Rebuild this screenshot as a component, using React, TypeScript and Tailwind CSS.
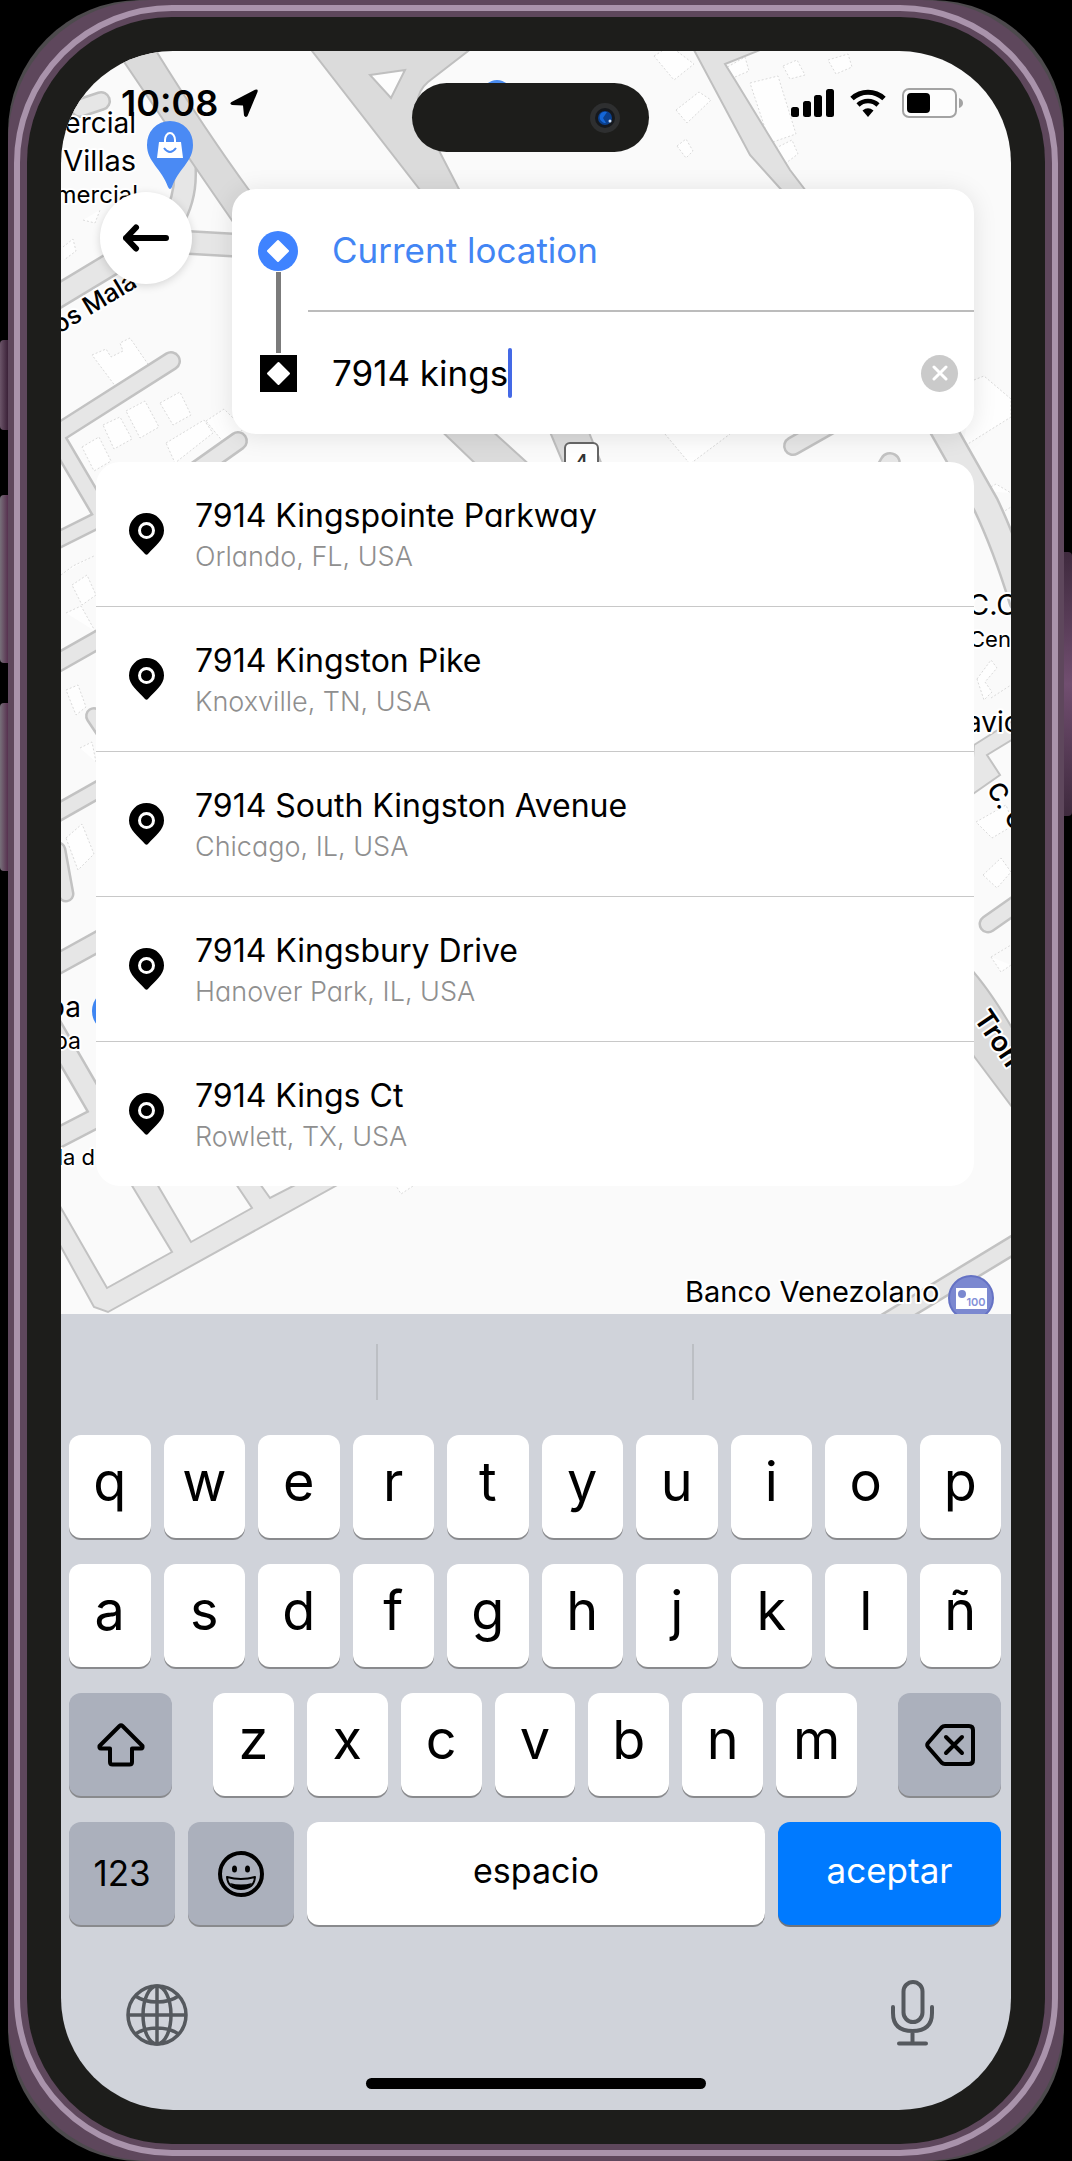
import type { ReactNode } from "react";

const results = [
  { title: "7914 Kingspointe Parkway", place: "Orlando, FL, USA" },
  { title: "7914 Kingston Pike", place: "Knoxville, TN, USA" },
  { title: "7914 South Kingston Avenue", place: "Chicago, IL, USA" },
  { title: "7914 Kingsbury Drive", place: "Hanover Park, IL, USA" },
  { title: "7914 Kings Ct", place: "Rowlett, TX, USA" },
];

const minorRoads: { d: string; w: number }[] = [
  { d: "M185 120 L185 175 Q185 200 172 222", w: 22 },
  { d: "M50 301 L128 254 Q150 241 180 242 L250 246", w: 23 },
  { d: "M50 438 L171 361", w: 18 },
  { d: "M52 430 L102 515", w: 17 },
  { d: "M50 544 L106 516", w: 16 },
  { d: "M190 475 L238 441", w: 18 },
  { d: "M50 667 L110 633", w: 18 },
  { d: "M94 716 L110 740", w: 16 },
  { d: "M50 817 L110 783", w: 17 },
  { d: "M58 850 L66 894", w: 15 },
  { d: "M80 108 L101 101", w: 18 },
  { d: "M50 968 L110 935", w: 20 },
  { d: "M50 1025 L108 1125", w: 22 },
  { d: "M50 1142 L110 1111", w: 20 },
  { d: "M793 446 L860 408", w: 18 },
  { d: "M890 463 L880 480", w: 20 },
  { d: "M935 415 L986 505 Q1005 545 1022 600", w: 26 },
  { d: "M988 924 L1025 898", w: 17 },
  { d: "M1025 1238 L880 1326", w: 18 },
];

const blocks = [
  "M61 1208 L107 1288 172 1252 131 1184 157 1184 191 1242 252 1208 236 1184 260 1184 270 1198 297 1184 339 1184 108 1312 94 1307 55 1236 Z",
  "M974 745 L1020 716 1020 735 987 755 1000 775 970 796 Z",
];

const buildings = [
  "M92 355 l14 -6 5 8 12 -6 -3 -8 10 -5 22 32 -36 17 Z",
  "M126 411 l19 -10 14 26 -19 11 Z",
  "M160 403 l20 -11 11 23 -18 10 Z",
  "M103 425 l17 -8 12 22 -18 10 Z",
  "M82 447 l17 -10 12 24 -17 10 Z",
  "M166 443 l38 -23 9 13 -38 30 Z",
  "M206 421 l18 -12 20 20 -20 14 Z",
  "M83 220 l12 3 5 -13 M63 247 l10 -8 3 12 -12 9",
  "M654 56 l16 -10 24 18 -20 16 Z",
  "M676 110 l23 -18 12 8 -24 23 Z",
  "M677 146 l9 -7 7 12 -7 7 Z",
  "M783 66 l14 -6 8 15 -15 4 Z",
  "M828 60 l20 -6 4 13 -16 7 Z",
  "M724 69 l21 -12 4 14 -21 9 Z",
  "M750 83 l28 -7 18 58 -26 9 Z",
  "M772 150 l20 -10 6 14 -16 12 Z",
  "M665 434 l25 30 40 -30",
  "M974 380 l10 -4 27 23 v18 l-48 30",
  "M984 491 l12 -7 15 9 M995 517 l16 -10",
  "M977 679 l14 -19 6 8 -12 14 7 10 -8 8 Z",
  "M991 698 l20 -13",
  "M976 822 l30 -17 8 20 -22 13 Z",
  "M983 875 l18 -17 10 14 -14 16 Z",
  "M991 957 l20 -12 M991 957 l10 15 10 -7",
  "M61 575 l12 -9 21 -10 M72 585 l15 -10 9 20 -14 10 Z",
  "M66 613 l15 -7 14 25",
  "M66 690 l12 -5 8 22 -10 8 Z",
  "M80 748 l12 -6 4 20",
  "M66 838 l16 -14 12 30 -16 16 Z",
  "M395 1184 l6 10 15 -10",
];

function MapBackdrop() {
  return (
    <svg
      className="absolute inset-0 h-full w-full"
      viewBox="61 51 950 1263"
      preserveAspectRatio="xMinYMin slice"
      fontFamily="Inter, sans-serif"
      aria-hidden="true"
    >
      <rect x="61" y="51" width="950" height="1263" fill="#fafafa" />
      <g fill="#fefefe" stroke="#dadada" strokeWidth="1" strokeDasharray="2 2">
        {buildings.map((d) => (
          <path key={d} d={d} />
        ))}
      </g>
      <g fill="none" stroke="#c2c2c2" strokeLinecap="round" strokeLinejoin="round">
        {minorRoads.map((r) => (
          <path key={r.d} d={r.d} strokeWidth={r.w + 2} />
        ))}
      </g>
      <g fill="none" stroke="#e6e6e6" strokeLinecap="round" strokeLinejoin="round">
        {minorRoads.map((r) => (
          <path key={r.d} d={r.d} strokeWidth={r.w - 3} />
        ))}
      </g>
      <g fill="#e7e7e7" stroke="#c2c2c2" strokeWidth="2">
        {blocks.map((d) => (
          <path key={d} d={d} />
        ))}
      </g>
      <g fill="#dbdbdb" stroke="#bfbfbf" strokeWidth="2">
        <path d="M116 50 L153 46 Q205 130 249 190 L240 232 Q190 160 160 115 Z" />
        <path d="M312 45 L312 51 424 195 462 195 419 112 Q414 94 428 82 L472 48 Z" />
        <path d="M370 75 L405 70 391 98 Z" fill="#fdfdfd" />
        <path d="M694 50 L750 155 786 195 809 195 790 170 735 80 725 64 760 50 Z" fill="#e2e2e2" />
        <path d="M430 420 L480 468 533 468 480 420 Z" />
        <path d="M545 420 L566 470 604 470 584 420 Z" />
        <path d="M970 968 Q990 990 1015 1033 L1015 1111 970 1051 Z" />
      </g>
      <circle cx="497" cy="94" r="14" fill="#4a8cf0" />
      <circle cx="114" cy="1011" r="22" fill="#3f86f2" />

      <path d="M170 121 a23 23 0 0 1 23 24 c0 17 -15 24 -21 42 q-2 4 -4 0 c-6 -18 -21 -25 -21 -42 a23 23 0 0 1 23 -24 Z" fill="#4a8af4" />
      <path d="M159 142 h22 l2 16 h-26 Z" fill="#fff" />
      <path d="M165 145 v-5 a5 7 0 0 1 10 0 v5" fill="none" stroke="#fff" strokeWidth="2" />
      <path d="M164 148 q6 8 12 0" fill="none" stroke="#4a8af4" strokeWidth="2" />

      <g fill="#000" stroke="#fff" strokeWidth="4" paintOrder="stroke" strokeLinejoin="round">
        <g textAnchor="end">
          <text x="136" y="133" fontSize="28">ercial</text>
          <text x="136" y="171" fontSize="29">Villas</text>
          <text x="138" y="203" fontSize="24">mercial</text>
          <text x="81" y="1017" fontSize="28">pa</text>
          <text x="81" y="1049" fontSize="23">pa</text>
          <text x="95" y="1165" fontSize="22">la d</text>
        </g>
        <text transform="translate(59 334) rotate(-31)" fontSize="25" fontWeight="500">os Mala</text>
        <text x="968" y="615" fontSize="29">C.C</text>
        <text x="969" y="647" fontSize="22">Cen</text>
        <text x="966" y="732" fontSize="28">avic</text>
        <text transform="translate(986 789) rotate(58)" fontSize="25" fontWeight="500">C. C</text>
        <text transform="translate(973 1018) rotate(56)" fontSize="28" fontWeight="600">Tron</text>
        <text x="685" y="1302" fontSize="29">Banco Venezolano</text>
      </g>

      <rect x="565" y="443" width="33" height="34" rx="5" fill="#fff" stroke="#666" strokeWidth="2" />
      <text x="581" y="473" fontSize="26" textAnchor="middle" fill="#333">4</text>

      <circle cx="971" cy="1298" r="22" fill="#7b88d0" stroke="#6572c4" strokeWidth="2" />
      <rect x="956" y="1288" width="31" height="21" fill="#fff" />
      <circle cx="962" cy="1294" r="4" fill="#7b88d0" />
      <text x="976" y="1306" fontSize="11" fontWeight="600" textAnchor="middle" fill="#8490d8">100</text>
    </svg>
  );
}

function StatusBar() {
  return (
    <div className="relative grid grid-cols-[1fr_237px_1fr] pt-8 pr-3">
      <div className="flex h-10 items-center gap-3 pl-15">
        <span className="text-[36px] leading-10 font-semibold">10:08</span>
        <svg width="28" height="28" viewBox="0 0 28 28" aria-label="Location in use">
          <path d="M1.500 13 L25 .8 Q28.500 -.5 27.500 3 L17.500 27 Q15.500 29 14 26.500 L13 16.500 L2 16 Q-1 15 1.500 13 Z" />
        </svg>
      </div>
      <div className="flex h-[69px] items-center justify-end rounded-full bg-[#1d1d1b] pr-7">
        <svg width="32" height="32" viewBox="0 0 32 32" aria-hidden="true">
          <circle cx="16" cy="16" r="15" fill="#2e2f30" />
          <circle cx="16" cy="16" r="10" fill="#15181d" />
          <circle cx="16" cy="16" r="7" fill="#0b3f8c" />
          <path d="M11 13 a6 6 0 0 1 7 -3 l-4 6 3 5 a6 6 0 0 1 -6 -8" fill="#1467d8" />
          <circle cx="21" cy="19" r="1.500" fill="#cfe0f5" />
        </svg>
      </div>
      <div className="flex h-10 items-center justify-end gap-4 pr-9">
        <svg width="43" height="28" viewBox="0 0 43 28" aria-label="Signal">
          <rect x="0" y="18" width="8" height="10" rx="2.500" />
          <rect x="12" y="12" width="8" height="16" rx="2.500" />
          <rect x="23" y="6" width="8" height="22" rx="2.500" />
          <rect x="35" y="0" width="8" height="28" rx="2.500" />
        </svg>
        <svg width="36" height="28" viewBox="0 0 36 28" aria-label="Wi-Fi">
          <path d="M2 9.500 A23.500 23.500 0 0 1 34 9.500" fill="none" stroke="#000" strokeWidth="5" />
          <path d="M8 16 A14.500 14.500 0 0 1 28 16" fill="none" stroke="#000" strokeWidth="4.500" />
          <path d="M12.500 21.500 Q18 17 23.500 21.500 L18 28 Z" />
        </svg>
        <svg width="61" height="30" viewBox="0 0 61 30" aria-label="Battery">
          <rect x="1" y="1" width="53" height="28" rx="6" fill="#fdfdfd" stroke="#a3a3a3" strokeWidth="2" />
          <rect x="5" y="5" width="23" height="20" rx="4" />
          <path d="M57 10 q4 1.500 4 5 t-4 5 Z" fill="#a3a3a3" />
        </svg>
      </div>
    </div>
  );
}

function RoutePoints() {
  return (
    <svg width="40" height="245" viewBox="0 0 40 245" className="ml-6.5 shrink-0" aria-hidden="true">
      <circle cx="20" cy="62" r="20" fill="#3f83ff" />
      <path d="M20 52 L30 62 20 72 10 62 Z" fill="#fff" stroke="#fff" strokeWidth="2" strokeLinejoin="round" />
      <rect x="18" y="83" width="5" height="81" fill="#7b7b7b" />
      <rect x="2" y="166" width="37" height="37" />
      <path d="M20.500 174 L31 184.500 20.500 195 10 184.500 Z" fill="#fff" stroke="#fff" strokeWidth="2" strokeLinejoin="round" />
    </svg>
  );
}

function SearchCard() {
  return (
    <div className="relative mt-[37px] flex items-start gap-10 pr-[37px] pl-[39px]">
      <button
        aria-label="Back"
        className="mt-[3px] flex size-[92px] shrink-0 items-center justify-center rounded-full bg-white shadow-[0_2px_8px_rgba(0,0,0,0.15)]"
      >
        <svg width="46" height="30" viewBox="0 0 46 30" fill="none" stroke="#000" strokeWidth="6" strokeLinecap="round" strokeLinejoin="round">
          <path d="M43 15 H3 M13 4.500 L3 15 L13 25.500" />
        </svg>
      </button>
      <div className="flex min-w-0 flex-1 rounded-3xl bg-white shadow-[0_2px_24px_rgba(0,0,0,0.10)]">
        <RoutePoints />
        <div className="ml-2.5 flex min-w-0 flex-1 flex-col">
          <label className="flex h-[121px] items-center pl-6">
            <span className="sr-only">Pickup</span>
            <input
              type="text"
              defaultValue="Current location"
              className="w-full bg-transparent text-[35px] leading-[50px] text-[#4285f4] outline-none"
            />
          </label>
          <div className="flex h-[124px] items-center border-t-2 border-[#bcbcbc] pr-4 pl-6">
            <input
              type="text"
              aria-label="Destination"
              defaultValue="7914 kings"
              className="field-sizing-content min-w-0 bg-transparent text-[35px] leading-[50px] text-black outline-none"
            />
            <span className="h-[50px] w-1 shrink-0 rounded-full bg-[#4469e6]" />
            <button
              aria-label="Clear destination"
              className="ml-auto flex size-[37px] shrink-0 items-center justify-center rounded-full bg-[#cacaca]"
            >
              <svg width="16" height="16" viewBox="0 0 16 16" stroke="#fff" strokeWidth="3" strokeLinecap="round">
                <path d="M2 2 L14 14 M14 2 L2 14" />
              </svg>
            </button>
          </div>
        </div>
      </div>
    </div>
  );
}

function ResultList() {
  return (
    <ul className="relative mt-7 mr-[37px] mb-[128px] ml-[35px] divide-y divide-[#c8c8c8] rounded-3xl bg-white">
      {results.map((r) => (
        <li key={r.title}>
          <button className="flex h-36 w-full items-center gap-[31px] pl-[33px] text-left">
            <svg width="35" height="42" viewBox="0 0 35 42" className="shrink-0" aria-hidden="true">
              <path d="M17.500 0 A17.500 17.500 0 0 1 35 17.500 C35 27 26 33 19 41 Q17.500 42.500 16 41 C9 33 0 27 0 17.500 A17.500 17.500 0 0 1 17.500 0 Z" />
              <circle cx="17.500" cy="17.500" r="7" fill="none" stroke="#fff" strokeWidth="3" />
            </svg>
            <span className="flex flex-col pt-0.5 [font-feature-settings:'cv11']">
              <span className="text-[32px] leading-[43px] text-black">{r.title}</span>
              <span className="text-[27px] leading-[40px] font-light text-[#8f8f8f]">{r.place}</span>
            </span>
          </button>
        </li>
      ))}
    </ul>
  );
}

function LetterKey({ children }: { children: string }) {
  return (
    <button className="flex h-[103px] min-w-0 flex-1 justify-center rounded-xl bg-white text-[54px] leading-[94px] text-black shadow-[0_2px_0_#898a8d]">
      {children}
    </button>
  );
}

function ActionKey({ label, className, children }: { label: string; className: string; children: ReactNode }) {
  return (
    <button
      aria-label={label}
      className={`flex h-[103px] shrink-0 items-center justify-center rounded-xl bg-[#abb0bc] text-[35px] text-black shadow-[0_2px_0_#898a8d] ${className}`}
    >
      {children}
    </button>
  );
}

function Keyboard() {
  return (
    <div className="flex flex-col bg-[#d0d3da]">
      <div className="grid h-[121px] grid-cols-3 pt-[30px]">
        <span className="h-14 border-r-2 border-[#bcbfc4]" />
        <span className="h-14 border-r-2 border-[#bcbfc4]" />
        <span />
      </div>
      <div className="flex flex-col gap-[26px] pr-2.5 pl-2">
        {["qwertyuiop", "asdfghjklñ"].map((row) => (
          <div key={row} className="flex gap-[13px]">
            {Array.from(row).map((c) => (
              <LetterKey key={c}>{c}</LetterKey>
            ))}
          </div>
        ))}
        <div className="flex gap-[41px]">
          <ActionKey label="Shift" className="w-[103px]">
            <svg width="48" height="44" viewBox="0 0 48 44" fill="none" stroke="#000" strokeWidth="4" strokeLinejoin="round">
              <path d="M22.500 3 Q24 1.500 25.500 3 L45.500 23 Q46 25.500 44 25.500 H35 V39 Q35 41.500 32.500 41.500 H15.500 Q13 41.500 13 39 V25.500 H4 Q2 25.500 2.500 23 Z" />
            </svg>
          </ActionKey>
          <div className="flex min-w-0 flex-1 gap-[13px]">
            {Array.from("zxcvbnm").map((c) => (
              <LetterKey key={c}>{c}</LetterKey>
            ))}
          </div>
          <ActionKey label="Delete" className="w-[103px]">
            <svg width="50" height="42" viewBox="0 0 50 42" fill="none" stroke="#000" strokeWidth="4" strokeLinecap="round" strokeLinejoin="round">
              <path d="M20 2 H44 Q48 2 48 6 V36 Q48 40 44 40 H20 Q18 40 16.500 38.500 L3 23 Q1.500 21 3 19 L16.500 3.500 Q18 2 20 2 Z" />
              <path d="M21 13 L37 29 M37 13 L21 29" />
            </svg>
          </ActionKey>
        </div>
        <div className="flex gap-[13px]">
          <ActionKey label="Numbers" className="w-[106px]">
            123
          </ActionKey>
          <ActionKey label="Emoji" className="w-[106px]">
            <svg width="46" height="46" viewBox="0 0 46 46" fill="none">
              <circle cx="23" cy="23" r="21" stroke="#000" strokeWidth="4" />
              <ellipse cx="16.500" cy="18" rx="2.500" ry="3.500" fill="#000" />
              <ellipse cx="29.500" cy="18" rx="2.500" ry="3.500" fill="#000" />
              <path d="M9 26 Q23 30 37 26 Q36 38 23 38 Q10 38 9 26 Z" stroke="#000" strokeWidth="2" strokeLinejoin="round" />
              <path d="M12 32 Q23 35 34 32 Q31 38 23 38 Q15 38 12 32 Z" fill="#000" />
            </svg>
          </ActionKey>
          <button className="h-[103px] min-w-0 flex-1 rounded-xl bg-white pb-1.5 text-[34px] text-black shadow-[0_2px_0_#898a8d]">
            espacio
          </button>
          <button className="h-[103px] w-[223px] shrink-0 rounded-xl bg-[#007aff] pb-1.5 text-[35px] text-white shadow-[0_2px_0_#6f747c]">
            aceptar
          </button>
        </div>
      </div>
      <div className="mt-[55px] flex items-center justify-between pr-[77px] pl-[65px]">
        <button aria-label="Next keyboard">
          <svg width="62" height="66" viewBox="0 0 62 66" fill="none" stroke="#55595e" strokeWidth="3.500">
            <ellipse cx="31" cy="35" rx="29" ry="29" />
            <ellipse cx="31" cy="35" rx="14" ry="29" />
            <path d="M31 6 V64 M2 35 H60 M9.500 16 Q18 22 31 22 T52.500 16 M9.500 54 Q18 48 31 48 T52.500 54" />
          </svg>
        </button>
        <button aria-label="Dictate">
          <svg width="43" height="66" viewBox="0 0 43 66" fill="none" stroke="#55595e" strokeWidth="4" strokeLinecap="round">
            <rect x="12.500" y="2" width="19" height="40" rx="9.500" />
            <path d="M2 27 V33 Q2 51 21.500 51 T41 33 V27 M21.500 51 V63 M8 63.500 H35" />
          </svg>
        </button>
      </div>
      <div className="mx-auto mt-8 mb-[21px] h-[11px] w-[340px] rounded-full bg-black" />
    </div>
  );
}

export default function App() {
  return (
    <main className="relative min-h-screen overflow-hidden bg-black px-2 font-[Inter,sans-serif] text-black">
      <span className="absolute top-[340px] left-0 h-[90px] w-2 rounded-l bg-linear-to-r from-[#6b5569] to-[#3b2138]" />
      <span className="absolute top-[495px] left-0 h-[168px] w-2 rounded-l bg-linear-to-r from-[#77707a] to-[#56304f]" />
      <span className="absolute top-[703px] left-0 h-[168px] w-2 rounded-l bg-linear-to-r from-[#77707a] to-[#56304f]" />
      <span className="absolute top-[552px] right-0 h-[264px] w-2.5 rounded-r bg-linear-to-b from-[#3f2a3e] via-[#714e70] to-[#3f2a3e]" />
      <div className="relative rounded-[132px] bg-[#4d4a4d]">
        <div className="rounded-[142px] bg-[#5e475c] px-1.5 py-[5px]">
          <div className="rounded-[158px] border-6 border-[#a993ab] bg-[#5e475c] px-[7px] py-1.5">
            <div className="rounded-[145px] bg-[#1d1d1b] px-[34px] py-[34px]">
              <div className="overflow-hidden rounded-[112px]">
                <section className="relative flow-root overflow-hidden">
                  <MapBackdrop />
                  <StatusBar />
                  <SearchCard />
                  <ResultList />
                </section>
                <Keyboard />
              </div>
            </div>
          </div>
        </div>
      </div>
    </main>
  );
}
